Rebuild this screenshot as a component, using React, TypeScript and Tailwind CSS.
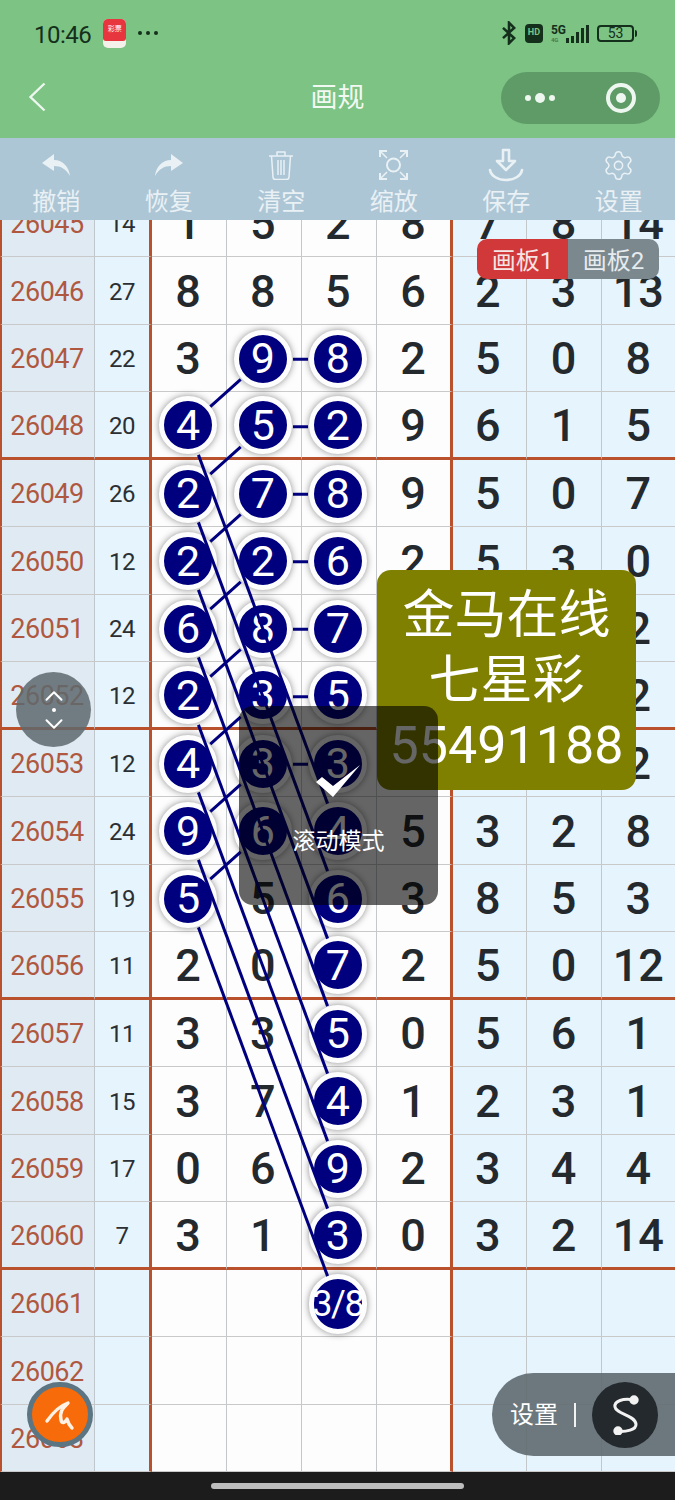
import { ChevronDown, ChevronUp, Settings } from 'lucide-react';

const FONT = "font-['Roboto','Noto_Sans_CJK_SC',sans-serif]";

const ROWS: { id: number; sum: number | null; cells: (number | string | null)[] }[] = [
  { id: 26045, sum: 14, cells: [1, 5, 2, 8, 7, 8, 14] },
  { id: 26046, sum: 27, cells: [8, 8, 5, 6, 2, 3, 13] },
  { id: 26047, sum: 22, cells: [3, 9, 8, 2, 5, 0, 8] },
  { id: 26048, sum: 20, cells: [4, 5, 2, 9, 6, 1, 5] },
  { id: 26049, sum: 26, cells: [2, 7, 8, 9, 5, 0, 7] },
  { id: 26050, sum: 12, cells: [2, 2, 6, 2, 5, 3, 0] },
  { id: 26051, sum: 24, cells: [6, 8, 7, null, null, null, 2] },
  { id: 26052, sum: 12, cells: [2, 3, 5, null, null, null, 2] },
  { id: 26053, sum: 12, cells: [4, 3, 3, null, null, null, 2] },
  { id: 26054, sum: 24, cells: [9, 6, 4, 5, 3, 2, 8] },
  { id: 26055, sum: 19, cells: [5, 5, 6, 3, 8, 5, 3] },
  { id: 26056, sum: 11, cells: [2, 0, 7, 2, 5, 0, 12] },
  { id: 26057, sum: 11, cells: [3, 3, 5, 0, 5, 6, 1] },
  { id: 26058, sum: 15, cells: [3, 7, 4, 1, 2, 3, 1] },
  { id: 26059, sum: 17, cells: [0, 6, 9, 2, 3, 4, 4] },
  { id: 26060, sum: 7, cells: [3, 1, 3, 0, 3, 2, 14] },
  { id: 26061, sum: null, cells: [null, null, '3/8', null, null, null, null] },
  { id: 26062, sum: null, cells: [null, null, null, null, null, null, null] },
  { id: 26063, sum: null, cells: [null, null, null, null, null, null, null] },
];

const ROW_H = 67.5;
const COL_X = [188, 263, 338];
const cy = (i: number) => ROW_H * i + ROW_H / 2 + 0.5;

const NUDGE = ['pr-[1.5px]', 'pr-[1.5px]', 'pr-[1.5px]', '', 'pr-[3px]', 'pr-[1px]', ''];

function isBall(rowIdx: number, col: number) {
  if (col === 0) return rowIdx >= 3 && rowIdx <= 10;
  if (col === 1) return rowIdx >= 2 && rowIdx <= 9;
  if (col === 2) return rowIdx >= 2 && rowIdx <= 16;
  return false;
}

// line between two balls, cut back so it stops at the rim of each
function link(c1: number, r1: number, c2: number, r2: number) {
  const x1 = COL_X[c1];
  const y1 = cy(r1);
  const x2 = COL_X[c2];
  const y2 = cy(r2);
  const len = Math.hypot(x2 - x1, y2 - y1);
  const ux = (x2 - x1) / len;
  const uy = (y2 - y1) / len;
  return { x1: x1 + ux * 30, y1: y1 + uy * 30, x2: x2 - ux * 30, y2: y2 - uy * 30 };
}

const LINKS = [
  ...[2, 3, 4, 5, 6, 7, 8].map((r) => link(1, r, 2, r)),
  ...[2, 3, 4, 5, 6, 7, 8, 9].map((r) => link(1, r, 0, r + 1)),
  ...[3, 4, 5, 6, 7, 8, 9, 10].map((r) => link(0, r, 2, r + 6)),
];

function Ball({ value }: { value: number | string }) {
  const small = typeof value === 'string';
  return (
    <div className={`relative flex items-center justify-center rounded-full border-[5px] border-[#fdfdfd] bg-[#00007f] font-normal text-white shadow-[0_0_7px_rgba(0,0,0,0.45)] ${small ? 'h-[60px] w-[58px] text-[36px] tracking-[-1.5px]' : 'h-[58px] w-[58px] text-[43px]'}`}>
      {value}
    </div>
  );
}

function Table() {
  return (
    <div className="relative h-[1252px] shrink-0 overflow-hidden">
      <div className="relative -mt-[30.5px]">
        {ROWS.map((row, i) => {
          const heavy = i % 4 === 3 && i < 16;
          const line = heavy ? 'border-b-[3px] border-b-[#b9512c]' : 'border-b border-b-[#c9c9c9]';
          return (
            <div key={row.id} className="grid h-[67.5px] grid-cols-[95px_57px_74.5px_75px_75px_76px_74.5px_75px_73.5px] leading-none">
              <div className={`flex items-center justify-center border-l-[2px] border-r border-l-[#b9512c] border-r-[#bfc7cc] bg-[#dfeaf3] pr-[2px] pt-[4px] text-[27px] tracking-[-0.5px] text-[#b0583f] ${line}`}>{row.id}</div>
              <div className={`flex items-center justify-center border-r-[3px] border-r-[#b9512c] bg-[#e6f4fd] pt-[3px] text-[24px] tracking-[-0.5px] text-[#2b2f33] ${line}`}>{row.sum}</div>
              {row.cells.map((v, c) => {
                const edge = c === 3 ? 'border-r-[3px] border-r-[#b9512c]' : 'border-r border-r-[#c4c8ca]';
                const bg = c < 4 ? 'bg-[#fdfdfd]' : 'bg-[#e6f4fd]';
                return (
                  <div key={c} className={`flex items-center justify-center pt-[2px] text-[45px] font-medium text-[#24292d] ${bg} ${edge} ${line} ${NUDGE[c]}`}>
                    {v !== null && (isBall(i, c) ? <Ball value={v} /> : v)}
                  </div>
                );
              })}
            </div>
          );
        })}
        <svg className="absolute left-0 top-0" width="675" height="1283" fill="none" stroke="#00007f" strokeWidth="3">
          {LINKS.map((l, i) => (
            <line key={i} x1={l.x1} y1={l.y1} x2={l.x2} y2={l.y2} />
          ))}
        </svg>
      </div>
    </div>
  );
}

function UndoIcon() {
  return (
    <svg width="28" height="22" viewBox="0 0 28 22" fill="#e9f1f5">
      <path d="M12 0L0 9l12 8v-5c7 0 12 3 16 10C27 13 21 6 12 6z" />
    </svg>
  );
}

function RedoIcon() {
  return (
    <svg width="28" height="22" viewBox="0 0 28 22" fill="#e9f1f5">
      <path d="M16 0l12 9-12 8v-5C9 12 4 15 0 22 1 13 7 6 16 6z" />
    </svg>
  );
}

function TrashIcon() {
  return (
    <svg width="26" height="30" viewBox="0 0 26 30" fill="none" stroke="#e9f1f5" strokeWidth="1.5" strokeLinejoin="round">
      <path d="M1 6h24M9 6V2h8v4" />
      <path d="M3.500 6l1.500 21c0 1.500 1 2.500 2.500 2.500h11c1.500 0 2.500-1 2.500-2.500l1.500-21" />
      <path d="M10 10v15M13 10v15M16 10v15" />
    </svg>
  );
}

function ScanIcon() {
  return (
    <svg width="29" height="30" viewBox="0 0 29 30" fill="none" stroke="#e9f1f5" strokeWidth="2">
      <circle cx="14.500" cy="15" r="6.500" />
      <path d="M1 7V1h7M28 7V1h-7M1 23v6h7M28 23v6h-7" />
      <path d="M2 2l6 6M27 2l-6 6M2 28l6-6M27 28l-6-6" strokeWidth="1.500" />
    </svg>
  );
}

function SaveIcon() {
  return (
    <svg width="36" height="34" viewBox="0 0 36 34" fill="none" stroke="#e9f1f5" strokeWidth="2.600" strokeLinecap="round" strokeLinejoin="round">
      <path d="M15 2h6v11h6l-9 9-9-9h6z" />
      <path d="M2 22c1 6 8 10 16 10s15-4 16-10" />
    </svg>
  );
}

const TOOLS = [
  { label: '撤销', icon: <UndoIcon /> },
  { label: '恢复', icon: <RedoIcon /> },
  { label: '清空', icon: <TrashIcon /> },
  { label: '缩放', icon: <ScanIcon /> },
  { label: '保存', icon: <SaveIcon /> },
  { label: '设置', icon: <Settings size={33} color="#e9f1f5" strokeWidth={1.1} /> },
];

function Toolbar() {
  return (
    <div className="grid h-[82px] shrink-0 grid-cols-6 bg-[#adc6d5]">
      {TOOLS.map((t) => (
        <div key={t.label} className="flex flex-col items-center">
          <div className="flex h-[49px] items-center pt-[5px]">{t.icon}</div>
          <div className="text-[24px] leading-[30px] text-[#e9f1f5]">{t.label}</div>
        </div>
      ))}
    </div>
  );
}

function StatusBar() {
  return (
    <div className="flex h-[66px] items-center justify-between pl-[34px] pr-[38px] text-[#14301c]">
      <div className="flex items-center gap-[12px]">
        <span className="pt-[3px] text-[24px] tracking-[-0.5px]">10:46</span>
        <div className="flex h-[29px] w-[23px] flex-col overflow-hidden rounded-[5px] bg-[#f4f1ea]">
          <div className="flex h-[22px] items-center justify-center rounded-b-[3px] bg-[#e8363f] text-[7px] leading-none text-white">彩票</div>
        </div>
        <div className="flex gap-[4px]">
          <div className="h-[4px] w-[4px] rounded-full bg-[#14301c]" />
          <div className="h-[4px] w-[4px] rounded-full bg-[#14301c]" />
          <div className="h-[4px] w-[4px] rounded-full bg-[#14301c]" />
        </div>
      </div>
      <div className="flex items-center gap-[8px]">
        <svg width="16" height="24" viewBox="0 0 16 28" fill="none" stroke="#14301c" strokeWidth="3">
          <path d="M1 8l13 12-6 6V2l6 6L1 20" />
        </svg>
        <div className="flex h-[19px] w-[18px] items-center justify-center rounded-[4px] bg-[#14301c] text-[9px] font-bold text-[#7cc384]">HD</div>
        <div className="flex items-end">
          <div className="flex flex-col text-[12px] font-bold leading-[12px]">
            <span>5G</span>
            <span className="text-[6px] leading-[7px] opacity-50">4G</span>
          </div>
          <div className="flex items-end gap-[2px]">
            <div className="h-[5px] w-[3px] bg-[#14301c]" />
            <div className="h-[7px] w-[3px] bg-[#14301c]" />
            <div className="h-[11px] w-[3px] bg-[#14301c]" />
            <div className="h-[15px] w-[3px] bg-[#14301c]" />
            <div className="h-[18px] w-[3px] bg-[#14301c]" />
          </div>
        </div>
        <div className="flex items-center gap-[1px]">
          <div className="flex h-[17px] w-[37px] items-center justify-center rounded-[4px] border-2 border-[#14301c] text-[14px] leading-none">53</div>
          <div className="h-[7px] w-[2px] rounded-r bg-[#14301c]" />
        </div>
      </div>
    </div>
  );
}

function NavBar() {
  return (
    <div className="relative flex h-[72px] items-start justify-between pl-[28px] pr-[15px]">
      <svg width="18" height="30" viewBox="0 0 18 30" fill="none" stroke="#eef7ef" strokeWidth="2.400" className="mt-[16px]">
        <path d="M16.500 1.500L2.500 15l14 13.500" />
      </svg>
      <div className="absolute left-0 right-0 top-[13px] text-center text-[27px] leading-[38px] text-[#f2f8f2]">画规</div>
      <div className="mt-[6px] flex h-[52px] w-[159px] items-center justify-between rounded-full bg-[#5f9b67] px-[24px]">
        <div className="flex items-center gap-[4px]">
          <div className="h-[6px] w-[6px] rounded-full bg-[#eef7ef]" />
          <div className="h-[10px] w-[10px] rounded-full bg-[#eef7ef]" />
          <div className="h-[6px] w-[6px] rounded-full bg-[#eef7ef]" />
        </div>
        <div className="flex h-[30px] w-[30px] items-center justify-center rounded-full border-[4px] border-[#eef7ef]">
          <div className="h-[10px] w-[10px] rounded-full bg-[#eef7ef]" />
        </div>
      </div>
    </div>
  );
}

export default function App() {
  return (
    <div className={`relative flex h-[1500px] w-[675px] flex-col overflow-hidden bg-black ${FONT}`}>
      <div className="h-[138px] shrink-0 bg-[#7cc384]">
        <StatusBar />
        <NavBar />
      </div>
      <Toolbar />
      <Table />
      <div className="flex h-[28px] shrink-0 items-center justify-center bg-[#1c1c1c]">
        <div className="h-[6px] w-[253px] rounded-full bg-[#bdbdbd]" />
      </div>

      {/* board tabs */}
      <div className="absolute left-[477px] top-[239px] flex h-[40px] text-[24px] leading-[44px]">
        <div className="w-[91px] rounded-l-[10px] bg-[#d0383a] text-center text-[#f6e4e4]">画板1</div>
        <div className="w-[91px] rounded-r-[10px] bg-[#7b888e] text-center text-[#e6ebee]">画板2</div>
      </div>

      {/* advert */}
      <div className="absolute left-[377px] top-[570px] flex h-[220px] w-[259px] flex-col items-center justify-center rounded-[14px] bg-[#808000] text-[52px] leading-[65px] text-white">
        <div>金马在线</div>
        <div>七星彩</div>
        <div>55491188</div>
      </div>

      {/* scroll handle */}
      <div className="absolute left-[16px] top-[672px] flex h-[75px] w-[75px] flex-col items-center justify-center rounded-full bg-[#5e686d]/85 text-white">
        <ChevronUp size={30} strokeWidth={1.6} className="-mb-[3px]" />
        <div className="h-[4px] w-[4px] rounded-full bg-white" />
        <ChevronDown size={30} strokeWidth={1.6} className="-mt-[3px]" />
      </div>

      {/* toast */}
      <div className="absolute left-[239px] top-[706px] flex h-[199px] w-[199px] flex-col items-center rounded-[14px] bg-black/60 text-white">
        <svg width="46" height="32" viewBox="0 0 46 32" fill="#ffffff" className="mt-[59px]">
          <path d="M0 17l6-5 11 9L44 0 17 32z" />
        </svg>
        <div className="mt-[29px] text-[23px] leading-[32px]">滚动模式</div>
      </div>

      {/* floating logo */}
      <div className="absolute left-[27px] top-[1382px] flex h-[65px] w-[66px] items-center justify-center rounded-full border-[5px] border-[#5b7582] bg-[#f76b0a]">
        <svg width="36" height="36" viewBox="0 0 36 36" fill="none" stroke="#fff2e4" strokeWidth="3.400" strokeLinecap="round" strokeLinejoin="round">
          <path d="M5 24C10 17 17 9 26 6 22 10 17 14 19 23c1 4 4 3 6-1 1 4 3 7 5 9" />
        </svg>
      </div>

      {/* settings pill */}
      <div className="absolute right-0 top-[1373px] flex h-[83px] w-[183px] items-center rounded-l-[42px] bg-[#5f6a70]/90 pl-[18px] text-white">
        <span className="text-[24px]">设置</span>
        <div className="ml-[16px] h-[24px] w-[2px] bg-[#f2f2f2]" />
        <div className="ml-[16px] flex h-[66px] w-[66px] items-center justify-center rounded-full bg-[#23292c]">
          <svg width="32" height="40" viewBox="0 0 32 40" fill="none" stroke="#f2f2f2" strokeWidth="3" strokeLinecap="round">
            <path d="M25 5C14 3 5 6 6 12c1 7 20 8 21 17 .5 6-10 8-18 7.500" />
            <circle cx="25" cy="5" r="3.200" fill="#f2f2f2" />
            <circle cx="9" cy="36" r="3.200" fill="#f2f2f2" />
          </svg>
        </div>
      </div>
    </div>
  );
}
